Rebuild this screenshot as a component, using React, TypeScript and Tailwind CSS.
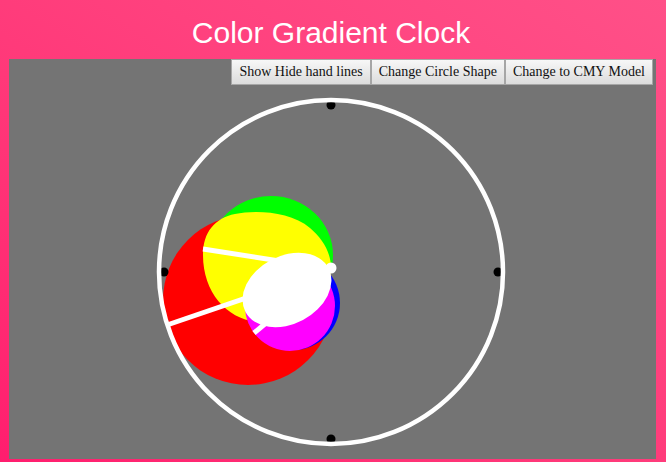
import React from 'react';

// Clock face geometry, in panel coordinates (panel is 647 x 400)
const CX = 322;
const CY = 213;
const RING_R = 172;
const TICK_R = 167;

// Hand origin sits a little above the face centre
const HX = 322;
const HY = 210;

const HANDS = [
	{ x: 194, y: 190 },
	{ x: 158, y: 266 },
	{ x: 245, y: 274 },
];

const TICKS = [
	{ x: CX, y: CY - TICK_R },
	{ x: CX + TICK_R, y: CY },
	{ x: CX, y: CY + TICK_R },
	{ x: CX - TICK_R, y: CY },
];

const BUTTONS = ['Show Hide hand lines', 'Change Circle Shape', 'Change to CMY Model'];

function ClockFace() {
	return (
		<svg width="647" height="400" viewBox="0 0 647 400" className="block">
			{/* colour blobs, drawn in page coordinates */}
			<g transform="translate(-9 -59)">
				<circle cx={248} cy={300} r={85} fill="#ff0000" />
				<ellipse cx={271} cy={255} rx={62} ry={59} fill="#00ff00" />
				<path
					d="M 203 255 C 203 232, 215 218, 235 214 C 255 210, 290 211, 310 228 C 322 238, 331 252, 331 268 C 331 300, 300 322, 262 322 C 230 322, 203 295, 203 255 Z"
					fill="#ffff00"
				/>
				<circle cx={293} cy={303} r={47} fill="#0000ff" />
				<circle cx={290} cy={306} r={45} fill="#ff00ff" />
			</g>

			{/* hands */}
			{HANDS.map((h, i) => (
				<line key={i} x1={HX} y1={HY} x2={h.x} y2={h.y} stroke="#ffffff" strokeWidth={5} />
			))}

			<ellipse cx={278} cy={231} rx={47} ry={34} fill="#ffffff" transform="rotate(-28 278 231)" />
			<circle cx={HX} cy={HY - 1} r={5.5} fill="#ffffff" />

			{/* hour ticks under the ring */}
			{TICKS.map((t, i) => (
				<circle key={i} cx={t.x} cy={t.y} r={4.5} fill="#000000" />
			))}
			<circle cx={CX} cy={CY} r={RING_R} fill="none" stroke="#ffffff" strokeWidth={4.5} />
		</svg>
	);
}

export default function App() {
	return (
		<div className="h-[462px] w-full overflow-hidden bg-linear-to-tr from-[#ff1d6e] to-[#ff5088] font-['Liberation_Sans',Arial,sans-serif]">
			<h1 className="pt-[16px] pr-[4px] text-center text-[30px] leading-[34px] text-white">Color Gradient Clock</h1>

			<div className="relative mt-[9px] ml-[9px] h-[400px] w-[647px] bg-[#747474]">
				<ClockFace />

				{/* control buttons over the canvas */}
				<div className="absolute top-0 right-[3px] flex">
					{BUTTONS.map((label) => (
						<button
							key={label}
							className="h-[26px] border border-[#a6a6a6] bg-linear-to-b from-[#f7f7f7] to-[#dcdcdc] px-[7px] font-['Liberation_Serif','Times_New_Roman',serif] text-[14px] leading-[16px] whitespace-nowrap text-[#111111]"
						>
							{label}
						</button>
					))}
				</div>
			</div>
		</div>
	);
}
